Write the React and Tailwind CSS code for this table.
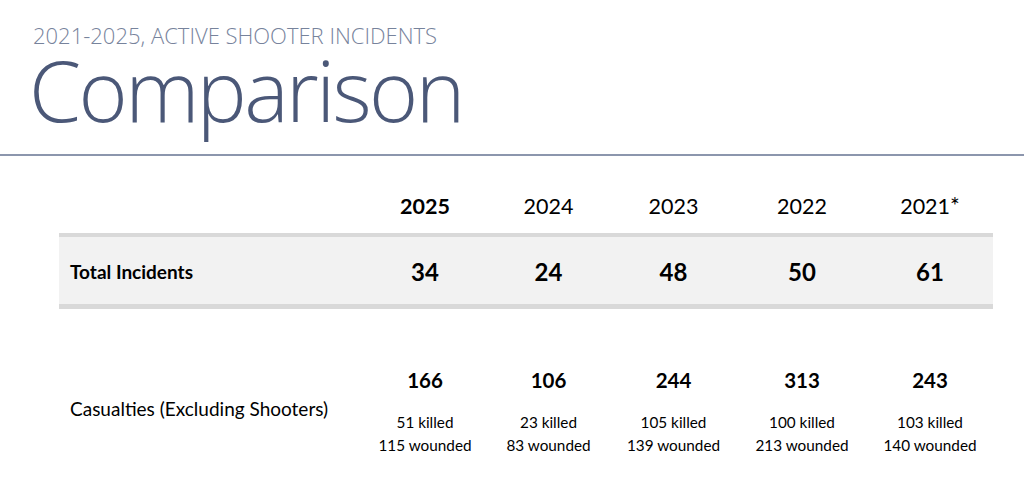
export default function App() {
  const years = [
    { label: "2025", bold: true },
    { label: "2024" },
    { label: "2023" },
    { label: "2022" },
    { label: "2021", mark: "*" },
  ];

  const totals = ["34", "24", "48", "50", "61"];

  const casualties = [
    { total: "166", killed: "51 killed", wounded: "115 wounded" },
    { total: "106", killed: "23 killed", wounded: "83 wounded" },
    { total: "244", killed: "105 killed", wounded: "139 wounded" },
    { total: "313", killed: "100 killed", wounded: "213 wounded" },
    { total: "243", killed: "103 killed", wounded: "140 wounded" },
  ];

  const cols = "grid grid-cols-[304px_124px_123px_127px_130px_126px]";

  return (
    <div className="w-full h-[486px] bg-white overflow-hidden font-['Lato',sans-serif] text-black">
      <header className="h-[156px] border-b-2 border-[#8c96ad] pl-[33px] font-['Open_Sans',sans-serif] font-light">
        <p className="pt-[24px] text-[22px] leading-[22px] text-[#77839c]">
          2021-2025, ACTIVE SHOOTER INCIDENTS
        </p>
        <h1 className="-ml-[4px] mt-[2px] text-[84px] leading-[84px] text-[#4b5878] tracking-[-2.6px]">
          Comparison
        </h1>
      </header>

      <main className="ml-[59px] w-[934px]">
        <div className={`${cols} h-[77px] items-end pb-[16px]`}>
          <div />
          {years.map((y) => (
            <div
              key={y.label}
              className={`text-center text-[21.5px] leading-[22px] ${y.bold ? "font-bold" : ""}`}
            >
              {y.label}
              {y.mark && <span className="text-[23px] leading-[22px]">{y.mark}</span>}
            </div>
          ))}
        </div>

        <div className={`${cols} h-[76px] items-center pt-[3px] bg-[#f2f2f2] border-t-4 border-b-[5px] border-[#d9d9d9]`}>
          <div className="pl-[11px] text-[19px] font-bold leading-[24px]">Total Incidents</div>
          {totals.map((t) => (
            <div key={t} className="text-center text-[24px] font-bold leading-[26px]">
              {t}
            </div>
          ))}
        </div>

        <div className={`${cols} pt-[59px]`}>
          <div className="pl-[11px] pt-[29px] text-[19px] leading-[24px]">
            Casualties (Excluding Shooters)
          </div>
          {casualties.map((c) => (
            <div key={c.total} className="flex flex-col items-center">
              <span className="text-[20.5px] font-bold leading-[24px]">{c.total}</span>
              <span className="mt-[19px] text-[15.3px] leading-[23px]">{c.killed}</span>
              <span className="text-[15.3px] leading-[23px]">{c.wounded}</span>
            </div>
          ))}
        </div>
      </main>
    </div>
  );
}
